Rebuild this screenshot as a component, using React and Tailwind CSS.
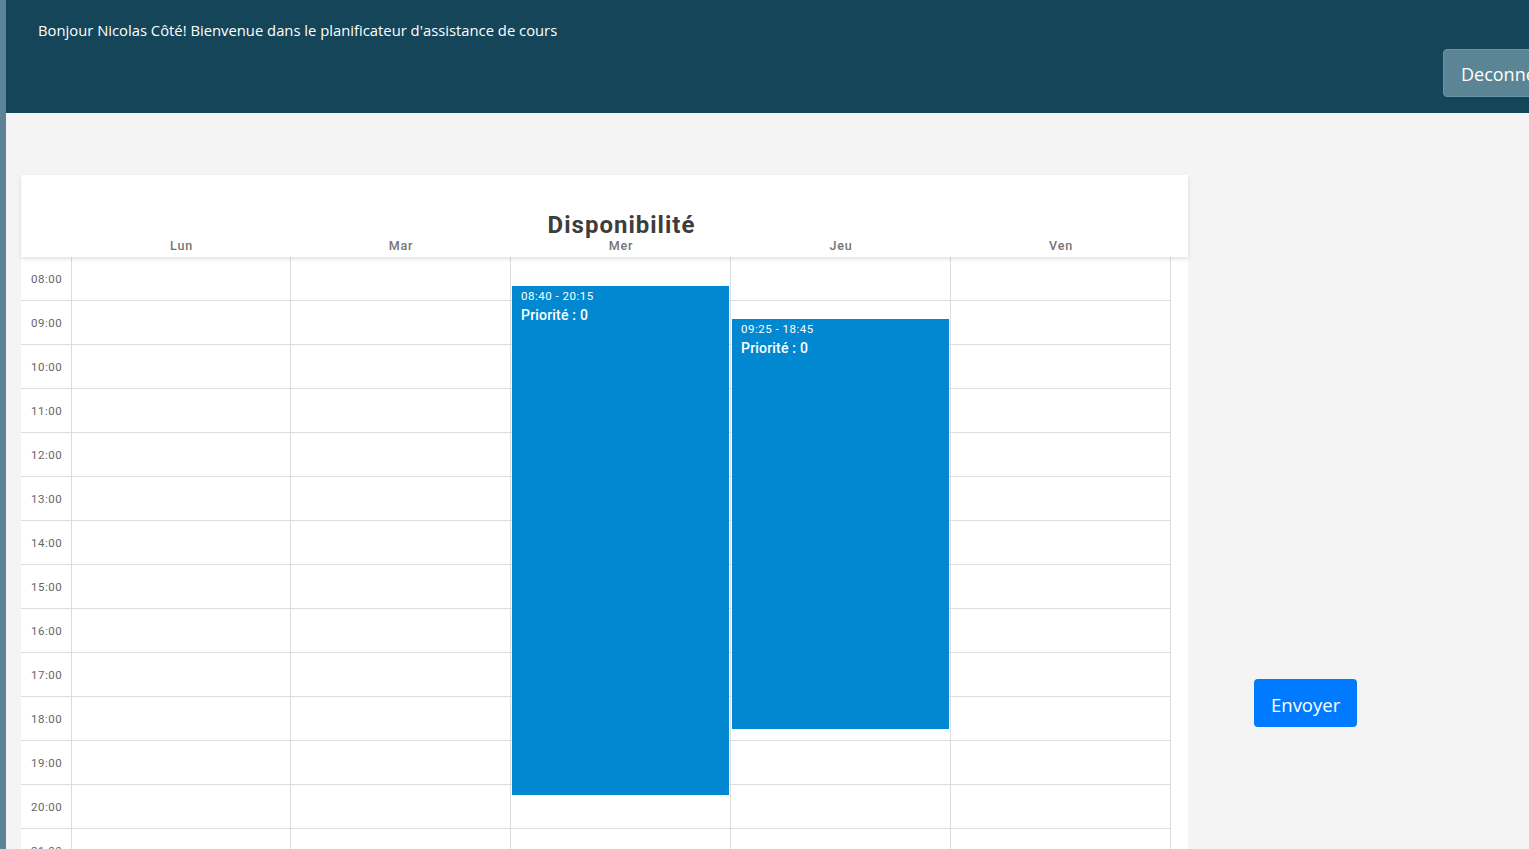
import React from 'react';

const days = ['Lun', 'Mar', 'Mer', 'Jeu', 'Ven'];
const hours = ['08:00', '09:00', '10:00', '11:00', '12:00', '13:00', '14:00', '15:00', '16:00', '17:00', '18:00', '19:00', '20:00', '21:00'];
const ROW = 44;

const events = {
  Mer: { start: '08:40', end: '20:15', priority: 0 },
  Jeu: { start: '09:25', end: '18:45', priority: 0 },
};

const toOffset = (t) => {
  const [h, m] = t.split(':').map(Number);
  return (h - 8 + m / 60) * ROW;
};

const EventBlock = ({ ev }) => {
  const top = Math.round(toOffset(ev.start));
  const height = Math.round(toOffset(ev.end)) - 1 - top;
  return (
    <div
      className="absolute left-[1px] right-[1px] bg-[#0288d1] text-white px-[9px] pt-[4px]"
      style={{ top, height }}
    >
      <div className="text-[11.5px] leading-[13px] tracking-[0.5px]">{ev.start} - {ev.end}</div>
      <div className="text-[14px] leading-[20px] font-medium tracking-[0.2px] mt-[2px]">Priorité : {ev.priority}</div>
    </div>
  );
};

export default function App() {
  return (
    <div className="flex h-screen w-screen overflow-hidden bg-[#f4f4f4] font-['Roboto',sans-serif]">
      <div className="w-[6px] shrink-0 bg-[#5b8497]" />
      <div className="flex-1 min-w-0 flex flex-col">
        <header className="h-[113px] shrink-0 bg-[#144559] overflow-hidden grid grid-cols-[1437px_auto]">
          <p className="pl-[32px] pt-[20px] text-[14.8px] text-white font-['Open_Sans',sans-serif] leading-[20px]">
            Bonjour Nicolas Côté! Bienvenue dans le planificateur d'assistance de cours
          </p>
          <div className="pt-[49px]">
            <button className="h-[48px] px-[17px] pt-[3px] rounded-[4px] bg-[#5b8594] border border-[#6b93a2] text-white text-[18px] whitespace-nowrap font-['Open_Sans',sans-serif]">
              Deconnexion
            </button>
          </div>
        </header>

        <div className="flex pt-[62px] pl-[15px]">
          <div className="w-[1167px] shrink-0 bg-white">
            <div className="relative z-10 bg-white shadow-[0_2px_4px_rgba(0,0,0,0.12)]">
              <div className="flex pt-[36px]">
                <div className="w-[51px] shrink-0" />
                <h1 className="w-[1099px] text-center text-[24px] leading-[28px] font-bold tracking-[1px] text-[#3d3d3d]">
                  Disponibilité
                </h1>
              </div>
              <div className="flex h-[18px]">
                <div className="w-[51px] shrink-0" />
                {days.map((d, i) => (
                  <div
                    key={d}
                    className={`${i === 0 ? 'w-[219px]' : 'w-[220px]'} text-center text-[12.5px] leading-[14px] font-medium tracking-[0.8px] text-[#757575]`}
                  >
                    {d}
                  </div>
                ))}
              </div>
            </div>

            <div className="flex">
              <div className="w-[51px] shrink-0 border-r border-[#ddd]">
                {hours.map((h) => (
                  <div key={h} className="h-[44px] border-b border-[#ddd] flex items-center pl-[10px] pt-[2px] text-[11.5px] tracking-[0.5px] text-[#666]">
                    {h}
                  </div>
                ))}
              </div>
              {days.map((d, i) => (
                <div key={d} className={`relative ${i === 0 ? 'w-[219px]' : 'w-[220px]'} shrink-0 border-r border-[#ddd]`}>
                  {hours.map((h) => (
                    <div key={h} className="h-[44px] border-b border-[#ddd]" />
                  ))}
                  {events[d] && <EventBlock ev={events[d]} />}
                </div>
              ))}
            </div>
          </div>

          <div className="pl-[66px] pt-[504px]">
            <button className="h-[48px] px-[17px] pt-[3px] rounded-[4px] bg-[#007bff] text-white text-[18.5px] font-['Open_Sans',sans-serif]">
              Envoyer
            </button>
          </div>
        </div>
      </div>
    </div>
  );
}
